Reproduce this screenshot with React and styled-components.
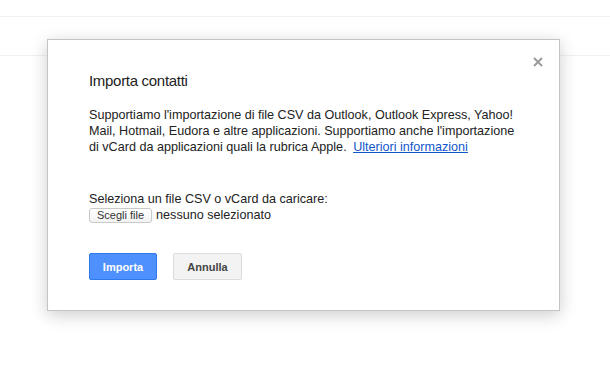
import React from "react";
import styled, { createGlobalStyle } from "styled-components";

const Global = createGlobalStyle`
  html, body {
    margin: 0;
    padding: 0;
    background: #fff;
    font-family: "Liberation Sans", Arial, sans-serif;
  }
`;

export default function App() {
  return (
    <Page>
      <Global />
      <TopBar />
      <Toolbar />
      <Dialog role="dialog">
        <CloseBtn aria-label="Chiudi">
          <svg width="10" height="10" viewBox="0 0 10 10">
            <path d="M1 1L9 9M9 1L1 9" stroke="#9a9a9a" strokeWidth="1.9" />
          </svg>
        </CloseBtn>
        <Title>Importa contatti</Title>
        <Body>
          Supportiamo l'importazione di file CSV da Outlook, Outlook Express,
          Yahoo! Mail, Hotmail, Eudora e altre applicazioni. Supportiamo anche
          l'importazione di vCard da applicazioni quali la rubrica Apple.{" "}
          <Link href="#">Ulteriori informazioni</Link>
        </Body>
        <FileField>
          <Label>Seleziona un file CSV o vCard da caricare:</Label>
          <FileRow>
            <FileBtn>Scegli file</FileBtn>
            <span>nessuno selezionato</span>
          </FileRow>
        </FileField>
        <Actions>
          <Button primary>Importa</Button>
          <Button>Annulla</Button>
        </Actions>
      </Dialog>
    </Page>
  );
}

const Page = styled.div`
  position: relative;
  width: 610px;
  height: 372px;
  overflow: hidden;
  background: #fff;
`;

const TopBar = styled.div`
  height: 16px;
  border-bottom: 1px solid #f1f1f1;
`;

const Toolbar = styled.div`
  height: 38px;
  border-bottom: 1px solid #f1f1f1;
`;

const Dialog = styled.div`
  position: absolute;
  left: 47px;
  top: 39px;
  width: 434px;
  padding: 31px 36px 30px 41px;
  background: #fff;
  border: 1px solid #c4c4c4;
  box-shadow: 0 4px 16px rgba(0, 0, 0, 0.2);
  color: #222;
`;

const CloseBtn = styled.button`
  position: absolute;
  top: 17px;
  right: 16px;
  width: 10px;
  height: 10px;
  padding: 0;
  border: 0;
  background: none;
  display: flex;
  cursor: pointer;
`;

const Title = styled.h2`
  margin: 0;
  font-size: 15px;
  letter-spacing: -0.3px;
  line-height: 20px;
  font-weight: normal;
  color: #222;
`;

const Body = styled.p`
  margin: 16px 0 0;
  font-size: 12.6px;
  line-height: 16px;
  color: #222;
`;

const Link = styled.a`
  margin-left: 3px;
  color: #15c;
  text-decoration: underline;
`;

const FileField = styled.div`
  margin-top: 36px;
  font-size: 12.6px;
  line-height: 16px;
  color: #222;
`;

const Label = styled.div``;

const FileRow = styled.div`
  display: flex;
  align-items: center;
  gap: 4px;
  height: 16px;
`;

const FileBtn = styled.span`
  display: inline-flex;
  align-items: center;
  height: 13px;
  padding: 0 7px;
  font-size: 11px;
  color: #333;
  background: linear-gradient(#fff, #f3f3f3);
  border: 1px solid #c9c9c9;
  border-radius: 3px;
`;

const Actions = styled.div`
  display: flex;
  gap: 16px;
  margin-top: 30px;
`;

const Button = styled.button`
  height: 27px;
  padding: 0 8px;
  font-family: inherit;
  font-size: 11px;
  font-weight: bold;
  border-radius: 2px;
  cursor: pointer;
  color: ${(p) => (p.primary ? "#fff" : "#444")};
  background: ${(p) => (p.primary ? "#4d90fe" : "#f3f3f3")};
  border: 1px solid ${(p) => (p.primary ? "#3079ed" : "#dcdcdc")};
  min-width: ${(p) => (p.primary ? "68px" : "69px")};
`;
